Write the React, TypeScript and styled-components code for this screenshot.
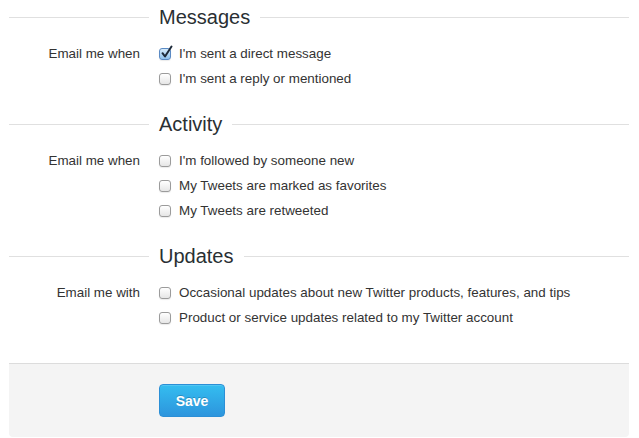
import React from "react";
import styled, { createGlobalStyle } from "styled-components";

const GlobalStyle = createGlobalStyle`
  html, body { margin: 0; padding: 0; background: #fff; }
  body { font-family: "Liberation Sans", Arial, sans-serif; color: #333; }
`;

const Page = styled.div`
  margin-left: 9px;
  width: 620px;
`;

const Section = styled.section`
  margin-bottom: 16px;
`;

const Legend = styled.div`
  display: flex;
  align-items: center;
  height: 34px;
  gap: 10px;
  margin-bottom: 7px;
`;

const Rule = styled.div<{ $w?: number }>`
  height: 1px;
  background: #e0e0e0;
  ${(p) => (p.$w ? `width: ${p.$w}px; flex: none;` : `flex: 1;`)}
`;

const Title = styled.h2`
  margin: 0;
  font-size: 20px;
  font-weight: normal;
  line-height: 34px;
  color: #292f33;
`;

const Row = styled.div`
  display: flex;
  align-items: flex-start;
`;

const Label = styled.div`
  width: 131px;
  padding-right: 19px;
  text-align: right;
  font-size: 13.4px;
  line-height: 25px;
  flex: none;
`;

const Options = styled.div`
  display: flex;
  flex-direction: column;
`;

const Option = styled.label`
  display: flex;
  align-items: center;
  height: 25px;
  font-size: 13.4px;
  gap: 8px;
`;

const Box = styled.span<{ $checked?: boolean }>`
  position: relative;
  width: 12px;
  height: 12px;
  box-sizing: border-box;
  border-radius: 3px;
  border: 1px solid ${(p) => (p.$checked ? "#5b8ac4" : "#9b9b9b")};
  background: ${(p) =>
    p.$checked
      ? "linear-gradient(#d6ebfb, #8fc2ee)"
      : "linear-gradient(#ffffff, #e6e6e6)"};
  box-shadow: 0 1px 1px rgba(0, 0, 0, 0.08);
  flex: none;
`;

const Check = styled.svg`
  position: absolute;
  left: 0px;
  top: -4px;
  width: 13px;
  height: 14px;
  overflow: visible;
`;

const Footer = styled.div`
  margin-top: 33px;
  background: #f4f4f4;
  border-top: 1px solid #dcdcdc;
  border-radius: 0 0 4px 4px;
  padding: 20px 0 20px 150px;
`;

const SaveButton = styled.button`
  width: 66px;
  height: 33px;
  border: 1px solid #2b8fd6;
  border-radius: 4px;
  background: linear-gradient(#34bdf0, #2d95dd);
  color: #fff;
  font-family: "Liberation Sans", Arial, sans-serif;
  font-weight: bold;
  font-size: 14px;
  text-shadow: 0 -1px 0 rgba(0, 0, 0, 0.2);
  box-shadow: inset 0 1px 0 rgba(255, 255, 255, 0.15);
  padding: 0;
  cursor: pointer;
`;

type Opt = { text: string; checked?: boolean };

const sections: { title: string; label: string; options: Opt[] }[] = [
  {
    title: "Messages",
    label: "Email me when",
    options: [
      { text: "I'm sent a direct message", checked: true },
      { text: "I'm sent a reply or mentioned" },
    ],
  },
  {
    title: "Activity",
    label: "Email me when",
    options: [
      { text: "I'm followed by someone new" },
      { text: "My Tweets are marked as favorites" },
      { text: "My Tweets are retweeted" },
    ],
  },
  {
    title: "Updates",
    label: "Email me with",
    options: [
      { text: "Occasional updates about new Twitter products, features, and tips" },
      { text: "Product or service updates related to my Twitter account" },
    ],
  },
];

export default function App() {
  return (
    <>
      <GlobalStyle />
      <Page>
        {sections.map((s) => (
          <Section key={s.title}>
            <Legend>
              <Rule $w={140} />
              <Title>{s.title}</Title>
              <Rule />
            </Legend>
            <Row>
              <Label>{s.label}</Label>
              <Options>
                {s.options.map((o) => (
                  <Option key={o.text}>
                    <Box $checked={o.checked}>
                      {o.checked && (
                        <Check viewBox="0 0 13 14">
                          <path
                            d="M2.5 8.2 L5 11.5 L11.5 1.5"
                            fill="none"
                            stroke="#1d2a3a"
                            strokeWidth="2"
                            strokeLinecap="round"
                            strokeLinejoin="round"
                          />
                        </Check>
                      )}
                    </Box>
                    <span>{o.text}</span>
                  </Option>
                ))}
              </Options>
            </Row>
          </Section>
        ))}
        <Footer>
          <SaveButton>Save</SaveButton>
        </Footer>
      </Page>
    </>
  );
}
